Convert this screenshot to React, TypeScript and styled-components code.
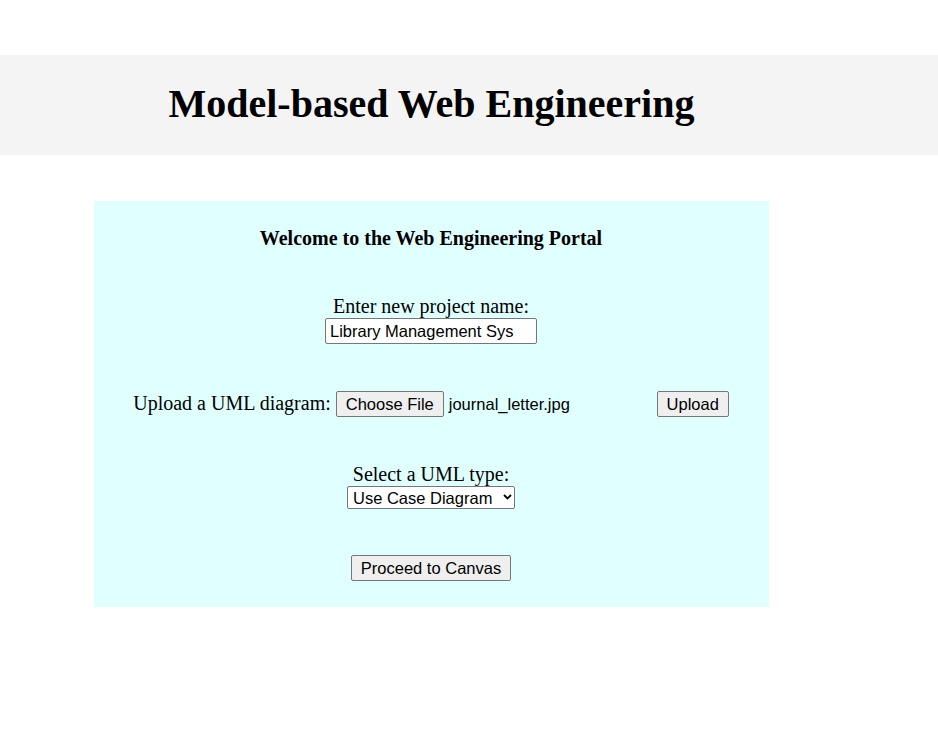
import React from "react";
import styled, { createGlobalStyle } from "styled-components";

const GlobalStyle = createGlobalStyle`
  html, body {
    margin: 0;
    padding: 0;
    background: #ffffff;
  }
  body {
    font-family: "Liberation Serif", "Times New Roman", serif;
    color: #000000;
  }
`;

const serif = `"Liberation Serif", "Times New Roman", serif`;
const sans = `"Liberation Sans", Arial, sans-serif`;

const Page = styled.div`
  display: flex;
  flex-direction: column;
  padding-top: 55px;
  padding-bottom: 128px;
`;

const Header = styled.header`
  box-sizing: border-box;
  height: 100px;
  padding-top: 26px;
  background: #f4f4f4;
`;

const Column = styled.div`
  width: 675px;
  margin-left: 94px;
`;

const Title = styled.h1`
  margin: 0;
  font-family: ${serif};
  font-size: 40px;
  line-height: 46px;
  font-weight: bold;
  text-align: center;
`;

const Panel = styled.main`
  box-sizing: border-box;
  width: 675px;
  margin: 46px 0 0 94px;
  padding: 26px 1px 26px 0;
  background: #e0ffff;
  display: flex;
  flex-direction: column;
  align-items: center;
`;

const Welcome = styled.h3`
  margin: 0;
  font-family: ${serif};
  font-size: 20px;
  line-height: 23px;
  font-weight: bold;
`;

const Field = styled.div<{ $gap: number }>`
  margin-top: ${(p) => p.$gap}px;
  display: flex;
  flex-direction: column;
  align-items: center;
`;

const Label = styled.label`
  font-family: ${serif};
  font-size: 20px;
  line-height: 23px;
  white-space: nowrap;
`;

const TextInput = styled.input`
  box-sizing: border-box;
  width: 212px;
  height: 26px;
  margin: 0;
  padding: 0 4px;
  border: 1px solid #767676;
  border-radius: 2px;
  background: #ffffff;
  font-family: ${sans};
  font-size: 16.5px;
  color: #000000;
  outline: none;
`;

const UploadRow = styled.div`
  margin-top: 47px;
  display: flex;
  align-items: baseline;
  gap: 5px;
`;

const Button = styled.button<{ $w: number }>`
  box-sizing: border-box;
  width: ${(p) => p.$w}px;
  height: 26px;
  margin: 0;
  padding: 0 0 1px;
  border: 1px solid #767676;
  border-radius: 2px;
  background: #efefef;
  font-family: ${sans};
  font-size: 16.5px;
  line-height: 18px;
  color: #000000;
  text-align: center;
  white-space: nowrap;
  cursor: default;
`;

const FileField = styled.div`
  width: 316px;
  display: flex;
  align-items: baseline;
  gap: 5px;
`;

const FileName = styled.span`
  font-family: ${sans};
  font-size: 16.5px;
  white-space: nowrap;
`;

const SelectWrap = styled.div`
  position: relative;
  width: 168px;
  height: 23px;
`;

const Select = styled.select`
  box-sizing: border-box;
  width: 168px;
  height: 23px;
  margin: 0;
  padding: 0 20px 0 5px;
  border: 1px solid #767676;
  border-radius: 2px;
  background: #ffffff;
  font-family: ${sans};
  font-size: 16.5px;
  color: #000000;
  appearance: none;
  -webkit-appearance: none;
  outline: none;
`;

const Chevron = styled.svg`
  position: absolute;
  right: 3px;
  top: 8px;
  width: 9px;
  height: 6px;
  pointer-events: none;
`;

const ProceedWrap = styled.div`
  margin-top: 46px;
`;

export default function App() {
  return (
    <>
      <GlobalStyle />
      <Page>
        <Header>
          <Column>
            <Title>Model-based Web Engineering</Title>
          </Column>
        </Header>
        <Panel>
          <Welcome>Welcome to the Web Engineering Portal</Welcome>
          <Field $gap={45}>
            <Label htmlFor="project">Enter new project name:</Label>
            <TextInput id="project" type="text" defaultValue="Library Management Sys" />
          </Field>
          <UploadRow>
            <Label>Upload a UML diagram:</Label>
            <FileField>
              <Button $w={108} type="button">Choose File</Button>
              <FileName>journal_letter.jpg</FileName>
            </FileField>
            <Button $w={72} type="button">Upload</Button>
          </UploadRow>
          <Field $gap={46}>
            <Label htmlFor="umltype">Select a UML type:</Label>
            <SelectWrap>
              <Select id="umltype" defaultValue="usecase">
                <option value="usecase">Use Case Diagram</option>
                <option value="class">Class Diagram</option>
                <option value="sequence">Sequence Diagram</option>
                <option value="activity">Activity Diagram</option>
              </Select>
              <Chevron viewBox="0 0 9 6">
                <path d="M1 1 L4.5 4.5 L8 1" fill="none" stroke="#000" strokeWidth="1.8" />
              </Chevron>
            </SelectWrap>
          </Field>
          <ProceedWrap>
            <Button $w={160} type="button">Proceed to Canvas</Button>
          </ProceedWrap>
        </Panel>
      </Page>
    </>
  );
}
